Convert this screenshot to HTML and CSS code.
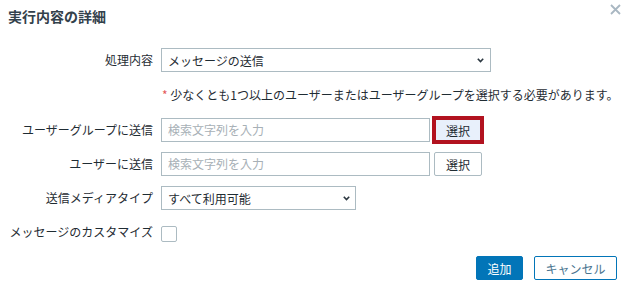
FILE: index.html
```html
<!DOCTYPE html>
<html>
<head>
  <meta charset="utf-8">
  <title>実行内容の詳細</title>
  <link rel="stylesheet" href="styles.css">
</head>
<body>
  <div class="dialog">
    <div class="dialog-head">
      <h2 class="dialog-title">実行内容の詳細</h2>
      <button class="close-btn" title="閉じる">
        <svg width="11" height="11" viewBox="0 0 11 11">
          <path d="M1 1 L10 10 M10 1 L1 10" stroke="#a9b7c2" stroke-width="1.8" fill="none"/>
        </svg>
      </button>
    </div>

    <div class="form-grid">
      <label class="field-label">処理内容</label>
      <div class="select select-wide">
        <span>メッセージの送信</span>
        <svg class="chev" width="7" height="5" viewBox="0 0 7 5"><path d="M0.8 0.8 L3.5 3.6 L6.2 0.8" stroke="#2b3740" stroke-width="1.6" fill="none"/></svg>
      </div>

      <span></span>
      <div class="note"><span class="req">*</span> 少なくとも1つ以上のユーザーまたはユーザーグループを選択する必要があります。</div>

      <label class="field-label">ユーザーグループに送信</label>
      <div class="pick-row">
        <div class="text-input placeholder">検索文字列を入力</div>
        <button class="btn-grey is-marked">選択</button>
      </div>

      <label class="field-label">ユーザーに送信</label>
      <div class="pick-row">
        <div class="text-input placeholder">検索文字列を入力</div>
        <button class="btn-grey">選択</button>
      </div>

      <label class="field-label">送信メディアタイプ</label>
      <div class="select select-mid">
        <span>すべて利用可能</span>
        <svg class="chev" width="7" height="5" viewBox="0 0 7 5"><path d="M0.8 0.8 L3.5 3.6 L6.2 0.8" stroke="#2b3740" stroke-width="1.6" fill="none"/></svg>
      </div>

      <label class="field-label">メッセージのカスタマイズ</label>
      <div class="check-cell"><span class="checkbox"></span></div>
    </div>

    <div class="dialog-foot">
      <button class="btn-primary">追加</button>
      <button class="btn-alt">キャンセル</button>
    </div>
  </div>
</body>
</html>
```

FILE: styles.css
```css
html, body {
  margin: 0;
  padding: 0;
  background: #ffffff;
}

body {
  width: 626px;
  height: 287px;
  overflow: hidden;
  font-family: "Noto Sans CJK JP", "Noto Sans", sans-serif;
  font-size: 12px;
  color: #1f2c33;
}

.dialog {
  padding: 0 9px 0 8px;
}

.dialog-head {
  display: flex;
  justify-content: space-between;
  align-items: flex-start;
  height: 48px;
}

.dialog-title {
  margin: 7px 0 0 0;
  font-size: 14px;
  line-height: 18px;
  font-weight: bold;
  color: #33414b;
}

.close-btn {
  border: none;
  background: transparent;
  padding: 0;
  margin: 4px -4px 0 0;
  width: 11px;
  height: 11px;
  line-height: 0;
  cursor: pointer;
}

.form-grid {
  display: grid;
  grid-template-columns: 145px 1fr;
  column-gap: 8px;
  row-gap: 10px;
}

.field-label {
  text-align: right;
  align-self: center;
  white-space: nowrap;
  line-height: 24px;
}

.select {
  box-sizing: border-box;
  height: 24px;
  border: 1px solid #acbbc2;
  display: flex;
  align-items: center;
  justify-content: space-between;
  padding: 0 6px 0 6px;
  background: #fff;
}

.select-wide {
  width: 330px;
}

.select-mid {
  width: 195px;
  padding-right: 5px;
}

.note {
  height: 26px;
  line-height: 26px;
  padding-left: 1px;
  white-space: nowrap;
}

.req {
  color: #e45959;
}

.pick-row {
  display: flex;
  align-items: center;
  gap: 4px;
}

.text-input {
  box-sizing: border-box;
  width: 269px;
  height: 24px;
  border: 1px solid #acbbc2;
  padding: 0 6px;
  line-height: 22px;
}

.placeholder {
  color: #a7b0b6;
}

.btn-grey {
  box-sizing: border-box;
  width: 48px;
  height: 24px;
  border: 1px solid #acbbc2;
  border-radius: 2px;
  background: #fff;
  color: #1f2c33;
  font-family: inherit;
  font-size: 12px;
  padding: 0;
}

.is-marked {
  background: #e8f0fb;
  border-radius: 0;
  outline: 4px solid #b2121f;
  outline-offset: -2px;
}

.check-cell {
  height: 24px;
  display: flex;
  align-items: center;
}

.checkbox {
  box-sizing: border-box;
  width: 16px;
  height: 16px;
  margin-top: 4px;
  border: 1px solid #acbbc2;
  border-radius: 2px;
  background: #fff;
}

.dialog-foot {
  display: flex;
  justify-content: flex-end;
  gap: 11px;
  margin-top: 12px;
}

.btn-primary,
.btn-alt {
  box-sizing: border-box;
  height: 24px;
  border-radius: 2px;
  font-family: inherit;
  font-size: 12px;
  padding: 0 10px;
}

.btn-primary {
  width: 47px;
  border: 1px solid #0275b8;
  background: #0275b8;
  color: #fff;
}

.btn-alt {
  width: 83px;
  border: 1px solid #0275b8;
  background: #fff;
  color: #4a7590;
}
```
